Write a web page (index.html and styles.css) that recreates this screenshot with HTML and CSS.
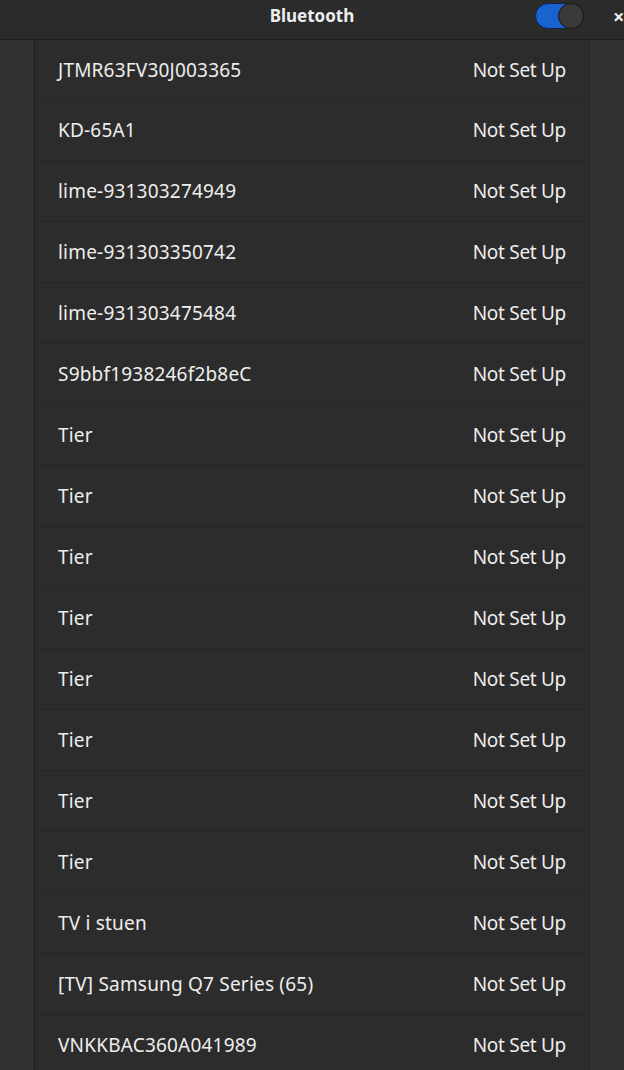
FILE: index.html
```html
<!DOCTYPE html>
<html>
<head>
<meta charset="utf-8">
<link rel="stylesheet" href="styles.css">
</head>
<body>
<header class="headerbar">
  <div class="title">Bluetooth</div>
  <div class="switch"><div class="knob"></div></div>
  <div class="close">×</div>
</header>
<main class="content">
  <div class="list">
    <div class="row"><span class="name">JTMR63FV30J003365</span><span class="status">Not Set Up</span></div>
    <div class="row"><span class="name">KD-65A1</span><span class="status">Not Set Up</span></div>
    <div class="row"><span class="name">lime-931303274949</span><span class="status">Not Set Up</span></div>
    <div class="row"><span class="name">lime-931303350742</span><span class="status">Not Set Up</span></div>
    <div class="row"><span class="name">lime-931303475484</span><span class="status">Not Set Up</span></div>
    <div class="row"><span class="name">S9bbf1938246f2b8eC</span><span class="status">Not Set Up</span></div>
    <div class="row"><span class="name">Tier</span><span class="status">Not Set Up</span></div>
    <div class="row"><span class="name">Tier</span><span class="status">Not Set Up</span></div>
    <div class="row"><span class="name">Tier</span><span class="status">Not Set Up</span></div>
    <div class="row"><span class="name">Tier</span><span class="status">Not Set Up</span></div>
    <div class="row"><span class="name">Tier</span><span class="status">Not Set Up</span></div>
    <div class="row"><span class="name">Tier</span><span class="status">Not Set Up</span></div>
    <div class="row"><span class="name">Tier</span><span class="status">Not Set Up</span></div>
    <div class="row"><span class="name">Tier</span><span class="status">Not Set Up</span></div>
    <div class="row"><span class="name">TV i stuen</span><span class="status">Not Set Up</span></div>
    <div class="row"><span class="name">[TV] Samsung Q7 Series (65)</span><span class="status">Not Set Up</span></div>
    <div class="row"><span class="name">VNKKBAC360A041989</span><span class="status">Not Set Up</span></div>
  </div>
</main>
</body>
</html>
```
FILE: styles.css
```css
html, body {
  margin: 0;
  padding: 0;
  height: 100%;
  overflow: hidden;
  background: #313131;
  font-family: "Noto Sans", "DejaVu Sans", sans-serif;
  color: #eeeeec;
}
.headerbar {
  height: 39px;
  border-bottom: 1px solid #1c1c1c;
  background: #2b2b2b;
  position: relative;
  display: flex;
  align-items: center;
  justify-content: center;
}
.title {
  font-weight: bold;
  font-size: 17px;
  margin-top: -8px;
}
.switch {
  position: absolute;
  left: 535px;
  top: 3px;
  width: 49px;
  height: 26px;
  border-radius: 13px;
  background: #1b62d1;
  box-sizing: border-box;
  border: 1px solid #11233d;
}
.knob {
  position: absolute;
  right: -1px;
  top: -1px;
  width: 26px;
  height: 26px;
  border-radius: 50%;
  background: #3a3a3a;
  box-sizing: border-box;
  border: 1px solid #151515;
}
.close {
  position: absolute;
  left: 613px;
  top: 3px;
  font-size: 20px;
  font-weight: bold;
}
.content {
  padding: 0 34px 0 34px;
}
.list {
  background: #2c2c2c;
  border-left: 1px solid #1d1d1d;
  border-right: 1px solid #252525;
}
.row {
  height: 60px;
  border-bottom: 1px solid #262626;
  display: flex;
  align-items: center;
  justify-content: space-between;
  padding: 0 23px 0 23px;
  font-size: 19px;
}
.row:first-child {
  height: 59px;
}
.name {
  letter-spacing: 0.2px;
}
.status {
  letter-spacing: -0.3px;
}
```
